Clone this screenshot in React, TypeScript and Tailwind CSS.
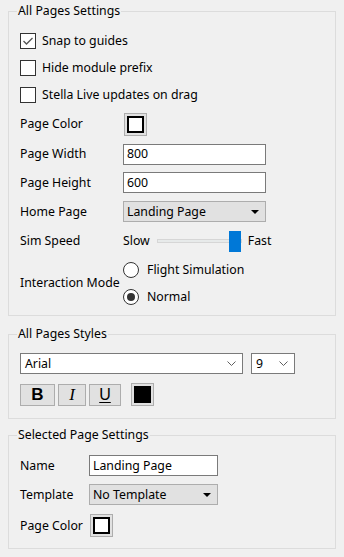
import { ReactNode } from "react";

// ── Small Win32-style controls ─────────────────────
function GroupBox({ title, children, className = "" }: { title: string; children: ReactNode; className?: string }) {
  return (
    <fieldset className={`mx-[8px] border border-[#dcdcdc] p-0 ${className}`}>
      <legend className="ml-[8px] px-[1px] text-[12.3px] leading-[16px] text-black">{title}</legend>
      {children}
    </fieldset>
  );
}

function CheckBox({ label, checked = false }: { label: string; checked?: boolean }) {
  return (
    <div className="flex h-[27px] items-center gap-[6px]">
      <div className="flex h-[16px] w-[16px] items-center justify-center border border-[#333333] bg-white">
        {checked && (
          <svg width="12" height="10" viewBox="0 0 12 10">
            <polyline points="1.5,5 4.5,8 10.5,2" fill="none" stroke="#555555" strokeWidth="1.3" />
          </svg>
        )}
      </div>
      <span>{label}</span>
    </div>
  );
}

function Radio({ label, checked = false }: { label: string; checked?: boolean }) {
  return (
    <div className="flex h-[27px] items-center gap-[8px]">
      <div className="flex h-[16px] w-[16px] items-center justify-center rounded-full border border-[#333333] bg-white">
        {checked && <div className="h-[8px] w-[8px] rounded-full bg-[#333333]" />}
      </div>
      <span>{label}</span>
    </div>
  );
}

function ColorSwatch({ fill = "white" }: { fill?: "white" | "black" }) {
  return (
    <div className="flex h-[23px] w-[23px] items-center justify-center border border-[#adadad] bg-[#e1e1e1]">
      {fill === "white" ? (
        <div className="h-[17px] w-[17px] border-2 border-black bg-white" />
      ) : (
        <div className="h-[17px] w-[17px] bg-black" />
      )}
    </div>
  );
}

function TextBox({ value, className = "" }: { value: string; className?: string }) {
  return (
    <div className={`flex h-[21px] items-center border border-[#7a7a7a] bg-white px-[3px] ${className}`}>
      {value}
    </div>
  );
}

function DropList({ value, className = "" }: { value: string; className?: string }) {
  return (
    <div className={`flex h-[21px] items-center justify-between border border-[#adadad] bg-[#e1e1e1] pl-[3px] pr-[6px] ${className}`}>
      <span>{value}</span>
      <svg width="8" height="4" viewBox="0 0 8 4">
        <polygon points="0,0 8,0 4,4" fill="#000000" />
      </svg>
    </div>
  );
}

function ComboBox({ value, className = "" }: { value: string; className?: string }) {
  return (
    <div className={`flex h-[21px] items-center justify-between border border-[#7a7a7a] bg-white pl-[4px] pr-[6px] ${className}`}>
      <span>{value}</span>
      <svg width="9" height="5" viewBox="0 0 9 5">
        <polyline points="0.5,0.5 4.5,4.5 8.5,0.5" fill="none" stroke="#606060" strokeWidth="1" />
      </svg>
    </div>
  );
}

function FormRow({ label, labelWidth, height, children }: { label: string; labelWidth: string; height: string; children: ReactNode }) {
  return (
    <div className={`flex items-center ${height}`}>
      <span className={`shrink-0 ${labelWidth}`}>{label}</span>
      {children}
    </div>
  );
}

function StyleButton({ children, className = "" }: { children: ReactNode; className?: string }) {
  return (
    <div className={`flex h-[22px] items-center justify-center border border-[#adadad] bg-[#e1e1e1] ${className}`}>
      {children}
    </div>
  );
}

// ── Panel ──────────────────────────────────────────
export default function App() {
  return (
    <div className="h-[557px] w-[344px] overflow-hidden bg-[#f0f0f0] pt-[3px] font-['Segoe_UI','Noto_Sans',sans-serif] text-[12.3px] leading-[16px] text-black">
      <GroupBox title="All Pages Settings">
        <div className="px-[11px] pt-[8px] pb-[5px]">
          <CheckBox label="Snap to guides" checked />
          <CheckBox label="Hide module prefix" />
          <CheckBox label="Stella Live updates on drag" />

          <FormRow label="Page Color" labelWidth="w-[104px]" height="h-[32px]">
            <ColorSwatch />
          </FormRow>
          <FormRow label="Page Width" labelWidth="w-[103px]" height="h-[28px]">
            <TextBox value="800" className="w-[143px]" />
          </FormRow>
          <FormRow label="Page Height" labelWidth="w-[103px]" height="h-[29px]">
            <TextBox value="600" className="w-[143px]" />
          </FormRow>
          <FormRow label="Home Page" labelWidth="w-[103px]" height="h-[29px]">
            <DropList value="Landing Page" className="w-[143px]" />
          </FormRow>
          <FormRow label="Sim Speed" labelWidth="w-[103px]" height="h-[30px]">
            <span>Slow</span>
            <div className="ml-[7px] flex h-[21px] w-[84px] items-center">
              <div className="h-[4px] flex-1 border border-[#d6d6d6] bg-[#e7eaea]" />
              <div className="-ml-[13px] h-[21px] w-[12px] bg-[#0078d7]" />
            </div>
            <span className="ml-[7px]">Fast</span>
          </FormRow>
          <div className="flex items-center">
            <span className="w-[103px] shrink-0">Interaction Mode</span>
            <div className="flex flex-col">
              <Radio label="Flight Simulation" />
              <Radio label="Normal" checked />
            </div>
          </div>
        </div>
      </GroupBox>

      <GroupBox title="All Pages Styles" className="mt-[10px]">
        <div className="px-[11px] pt-[11px] pb-[12px]">
          <div className="flex gap-[8px]">
            <ComboBox value="Arial" className="w-[223px]" />
            <ComboBox value="9" className="w-[44px]" />
          </div>
          <div className="mt-[9px] flex items-center">
            <StyleButton className="w-[35px]">
              <span className="font-['Liberation_Sans',sans-serif] text-[17px] font-bold">B</span>
            </StyleButton>
            <StyleButton className="ml-[3px] w-[28px]">
              <span className="font-['Liberation_Serif',serif] text-[17px] italic">I</span>
            </StyleButton>
            <StyleButton className="ml-[3px] w-[32px]">
              <span className="font-['Liberation_Sans',sans-serif] text-[16px] underline underline-offset-2">U</span>
            </StyleButton>
            <div className="ml-[10px]">
              <ColorSwatch fill="black" />
            </div>
          </div>
        </div>
      </GroupBox>

      <GroupBox title="Selected Page Settings" className="mt-[8px]">
        <div className="px-[11px] pt-[12px] pb-[11px]">
          <FormRow label="Name" labelWidth="w-[69px]" height="h-[21px]">
            <TextBox value="Landing Page" className="w-[129px]" />
          </FormRow>
          <div className="mt-[8px]">
            <FormRow label="Template" labelWidth="w-[69px]" height="h-[21px]">
              <DropList value="No Template" className="w-[129px]" />
            </FormRow>
          </div>
          <div className="mt-[9px]">
            <FormRow label="Page Color" labelWidth="w-[70px]" height="h-[23px]">
              <ColorSwatch />
            </FormRow>
          </div>
        </div>
      </GroupBox>
    </div>
  );
}
